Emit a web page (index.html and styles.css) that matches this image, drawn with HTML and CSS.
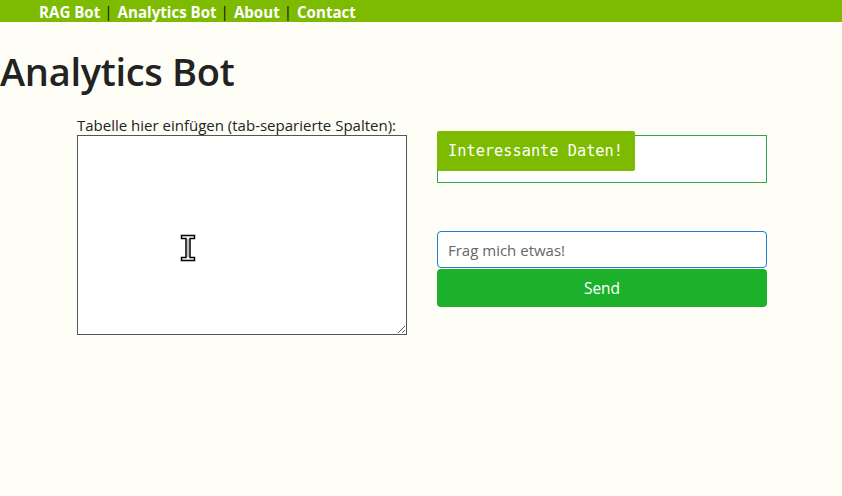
FILE: index.html
```html
<!DOCTYPE html>
<html lang="de">
<head>
<meta charset="utf-8">
<title>Analytics Bot</title>
<link rel="stylesheet" href="styles.css">
</head>
<body>
<nav class="topnav">
  <a href="#">RAG Bot</a><span class="sep">|</span>
  <a href="#">Analytics Bot</a><span class="sep">|</span>
  <a href="#">About</a><span class="sep">|</span>
  <a href="#">Contact</a>
</nav>
<h1 class="title">Analytics Bot</h1>
<main class="workspace">
  <label class="table-label" for="tbl">Tabelle hier einfügen (tab-separierte Spalten):</label>
  <div class="spacer"></div>
  <div class="table-wrap">
    <textarea id="tbl" class="table-input"></textarea>
    <svg class="cursor" width="16" height="28" viewBox="0 0 16 28">
      <path d="M1.5 1.5 H14.5 V4.5 H10 V23.5 H14.5 V26.5 H1.5 V23.5 H6 V4.5 H1.5 Z" fill="#fff" stroke="#000" stroke-width="1.5"/>
      <rect x="7" y="5" width="2" height="18" fill="#bbb"/>
    </svg>
  </div>
  <div class="chat">
    <div class="output">
      <div class="badge">Interessante Daten!</div>
    </div>
    <input class="ask" type="text" placeholder="Frag mich etwas!">
    <button class="send">Send</button>
  </div>
</main>
</body>
</html>
```
FILE: styles.css
```css
html, body {
  margin: 0;
  padding: 0;
}
body {
  background: #fefef6;
  font-family: "Open Sans", "Noto Sans", sans-serif;
  color: #222;
  width: 842px;
  height: 496px;
  overflow: hidden;
}
.topnav {
  background: #7cbb00;
  height: 22px;
  display: flex;
  align-items: center;
  padding-left: 39px;
  font-weight: 700;
  font-size: 15.1px;
  line-height: 22px;
}
.topnav a {
  color: #fff;
  text-decoration: none;
  padding-top: 1px;
}
.topnav .sep {
  color: #111;
  font-weight: 400;
  margin: 0 5px 0 4px;
}
.title {
  margin: 24px 0 0 0;
  font-size: 38px;
  font-weight: 600;
  line-height: 50px;
  color: #222;
  letter-spacing: -0.3px;
}
.workspace {
  display: grid;
  grid-template-columns: 330px 330px;
  column-gap: 30px;
  padding-left: 77px;
  margin-top: 19px;
}
.table-label {
  font-size: 15px;
  line-height: 20px;
  color: #222;
}
.table-wrap {
  position: relative;
  height: 200px;
}
.table-input {
  box-sizing: border-box;
  width: 330px;
  height: 200px;
  margin: 0;
  border: 1px solid #555;
  background: #fff;
  display: block;
}
.cursor {
  position: absolute;
  left: 103px;
  top: 99px;
}
.chat {
  display: flex;
  flex-direction: column;
}
.output {
  box-sizing: border-box;
  height: 48px;
  border: 1px solid #2fa84b;
  background: #fff;
  margin-bottom: 48px;
}
.badge {
  display: inline-block;
  margin: -5px 0 0 -1px;
  height: 40px;
  line-height: 40px;
  padding: 0 12px 0 11px;
  background: #7cbb00;
  color: #fff;
  font-family: "DejaVu Sans Mono", "Liberation Mono", monospace;
  font-size: 15.3px;
  border-radius: 2px;
}
.ask {
  box-sizing: border-box;
  height: 37px;
  width: 330px;
  margin: 0;
  border: 1px solid #1a7fd0;
  border-radius: 4px;
  padding: 0 10px;
  font-family: inherit;
  font-size: 15px;
  background: #fff;
}
.ask::placeholder {
  color: #666;
}
.send {
  margin-top: 1px;
  height: 38px;
  width: 330px;
  border: none;
  border-radius: 4px;
  background: #1db12b;
  color: #fff;
  font-family: inherit;
  font-size: 15.5px;
}
```
